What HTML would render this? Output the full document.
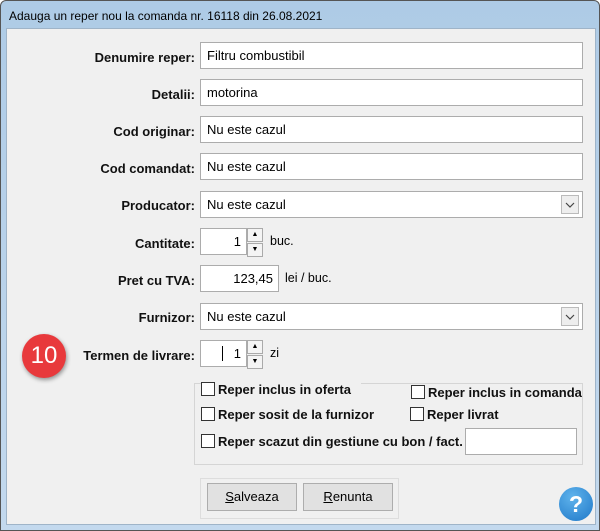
<!DOCTYPE html>
<html><head><style>
body{margin:0;width:600px;height:531px;overflow:hidden;background:#fff;font-family:"Liberation Sans",Arial,sans-serif;}
*{white-space:nowrap}
.win{position:absolute;left:0;top:0;width:598px;height:529px;border:1px solid #555;border-radius:6px 6px 0 0;background:linear-gradient(#aecbe6,#c3d9ee);}
.title{position:absolute;left:8px;top:8px;font-size:12px;color:#000;}
.body{position:absolute;left:6px;top:28px;width:588px;height:495px;background:#f0f0f0;border:1px solid #9fb4c8;}
.lbl{position:absolute;font-size:13px;font-weight:bold;color:#111;text-align:right;width:190px;left:0;}
.in{position:absolute;background:#fff;border:1px solid #acacac;box-sizing:border-box;font-size:13px;padding:5px 0 0 6px;height:27px;}
.dd{position:absolute;right:3px;top:3px;width:18px;height:19px;border:1px solid #bbb;background:#eee;box-sizing:border-box;}
.spin{position:absolute;width:16px;height:27px;box-sizing:border-box;}
.spin div{height:12px;border:1px solid #aaa;background:#f4f4f4;margin-bottom:1px;font-size:7px;text-align:center;line-height:11px}
.u{position:absolute;font-size:12.5px;}
.cb{position:absolute;font-size:13px;font-weight:bold;color:#111;}
.cb:before{content:"";display:inline-block;width:12px;height:12px;border:1px solid #333;background:#fff;vertical-align:-2px;margin-right:3px;}
.btn{position:absolute;top:483px;height:28px;border:1px solid #adadad;background:#e1e1e1;box-sizing:border-box;font-size:13px;text-align:center;line-height:26px;}
</style></head><body>
<div class="win"><div class="title">Adauga un reper nou la comanda nr. 16118 din 26.08.2021</div></div>
<div class="body"></div>
<div style="position:absolute;left:0;top:0">
<div class="lbl" style="top:50px;left:5px">Denumire reper:</div>
<div class="in" style="left:200px;top:42px;width:383px">Filtru combustibil</div>
<div class="lbl" style="top:87px;left:5px">Detalii:</div>
<div class="in" style="left:200px;top:79px;width:383px">motorina</div>
<div class="lbl" style="top:124px;left:5px">Cod originar:</div>
<div class="in" style="left:200px;top:116px;width:383px">Nu este cazul</div>
<div class="lbl" style="top:161px;left:5px">Cod comandat:</div>
<div class="in" style="left:200px;top:153px;width:383px">Nu este cazul</div>
<div class="lbl" style="top:198px;left:5px">Producator:</div>
<div class="in" style="left:200px;top:191px;width:383px">Nu este cazul<div class="dd"><svg width="16" height="17"><path d="M4 7l4 4 4-4" stroke="#444" fill="none" stroke-width="1.2"/></svg></div></div>
<div class="lbl" style="top:236px;left:5px">Cantitate:</div>
<div class="in" style="left:200px;top:228px;width:47px;text-align:right;padding-right:5px">1</div>
<div class="spin" style="left:247px;top:228px"><div>▲</div><div>▼</div></div>
<div class="u" style="left:270px;top:234px">buc.</div>
<div class="lbl" style="top:273px;left:5px">Pret cu TVA:</div>
<div class="in" style="left:200px;top:265px;width:79px;text-align:right;padding-right:5px">123,45</div>
<div class="u" style="left:285px;top:271px">lei / buc.</div>
<div class="lbl" style="top:310px;left:5px">Furnizor:</div>
<div class="in" style="left:200px;top:303px;width:383px">Nu este cazul<div class="dd"><svg width="16" height="17"><path d="M4 7l4 4 4-4" stroke="#444" fill="none" stroke-width="1.2"/></svg></div></div>
<div class="lbl" style="top:348px;left:5px">Termen de livrare:</div>
<div class="in" style="left:200px;top:340px;width:47px;text-align:right;padding-right:5px"><span style="position:absolute;left:21px;top:5px;width:1px;height:15px;background:#000"></span>1</div>
<div class="spin" style="left:247px;top:340px"><div>▲</div><div>▼</div></div>
<div class="u" style="left:270px;top:346px">zi</div>
<div style="position:absolute;left:22px;top:334px;width:44px;height:44px;border-radius:50%;background:#e8393c;box-shadow:1px 2px 4px rgba(0,0,0,.4);color:#fff;font-size:24px;text-align:center;line-height:44px">10</div>
<div style="position:absolute;left:194px;top:383px;width:389px;height:82px;border:1px solid #d5d5d5;box-sizing:border-box"></div>
<div class="cb" style="left:201px;top:382px;background:#f0f0f0;padding-right:10px">Reper inclus in oferta</div>
<div class="cb" style="left:411px;top:385px">Reper inclus in comanda</div>
<div class="cb" style="left:201px;top:407px">Reper sosit de la furnizor</div>
<div class="cb" style="left:410px;top:407px">Reper livrat</div>
<div class="cb" style="left:201px;top:434px">Reper scazut din gestiune cu bon / fact.</div>
<div style="position:absolute;left:465px;top:428px;width:112px;height:27px;background:#fff;border:1px solid #acacac;box-sizing:border-box"></div>
<div style="position:absolute;left:200px;top:478px;width:199px;height:41px;border:1px solid #ddd;box-sizing:border-box"></div>
<div class="btn" style="left:207px;width:90px"><u>S</u>alveaza</div>
<div class="btn" style="left:303px;width:90px"><u>R</u>enunta</div>
<div style="position:absolute;left:559px;top:487px;width:34px;height:34px;border-radius:50%;background:radial-gradient(circle at 40% 30%,#5fb3ec,#1f78c8);color:#fff;font-weight:bold;font-size:23px;text-align:center;line-height:34px">?</div>
</div>
</body></html>
